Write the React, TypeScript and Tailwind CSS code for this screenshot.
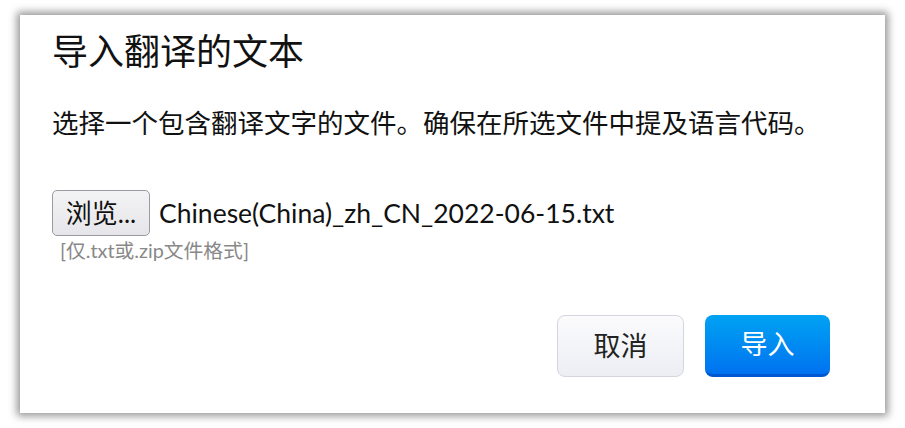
import React from 'react';

const ImportDialog: React.FC = () => {
  return (
    <div className="min-h-screen w-full bg-white pt-[15px] pl-[20px] font-['Lato','Noto_Sans_CJK_SC',sans-serif]">
      <div className="flex h-[398px] w-[865px] flex-col bg-white pl-[32px] pr-[55px] shadow-[0_0_8px_3px_rgba(0,0,0,0.42)]">
        {/* Title */}
        <h1 className="mt-[12px] text-[36px] leading-[48px] font-normal text-[#111]">导入翻译的文本</h1>

        {/* Description */}
        <p className="mt-[31px] text-[26.5px] leading-[34px] text-[#111]">
          选择一个包含翻译文字的文件。确保在所选文件中提及语言代码。
        </p>

        {/* File picker */}
        <div className="mt-[50px] flex items-center gap-[9px]">
          <button className="h-[46px] w-[98px] rounded-[5px] border border-[#9a9aa2] bg-gradient-to-b from-[#f3f3f5] to-[#e6e6ea] text-[26px] leading-none text-[#111]">
            浏览...
          </button>
          <span className="text-[26.5px] leading-[34px] text-[#111]">Chinese(China)_zh_CN_2022-06-15.txt</span>
        </div>
        <div className="ml-[8px] mt-[1px] text-[19.8px] leading-[26px] text-[#888]">[仅.txt或.zip文件格式]</div>

        {/* Actions */}
        <div className="mt-auto mb-[36px] flex justify-end gap-[21px]">
          <button className="h-[62px] w-[127px] rounded-[8px] border border-[#d3d6de] bg-gradient-to-b from-[#fbfbfd] to-[#eceef4] text-[27px] text-[#222]">
            取消
          </button>
          <button className="h-[62px] w-[125px] rounded-[8px] border-b-[3px] border-[#0058d0] bg-gradient-to-b from-[#00a2f2] to-[#0072f0] text-[27px] text-white">
            导入
          </button>
        </div>
      </div>
    </div>
  );
};

export default function App() {
  return <ImportDialog />;
}
